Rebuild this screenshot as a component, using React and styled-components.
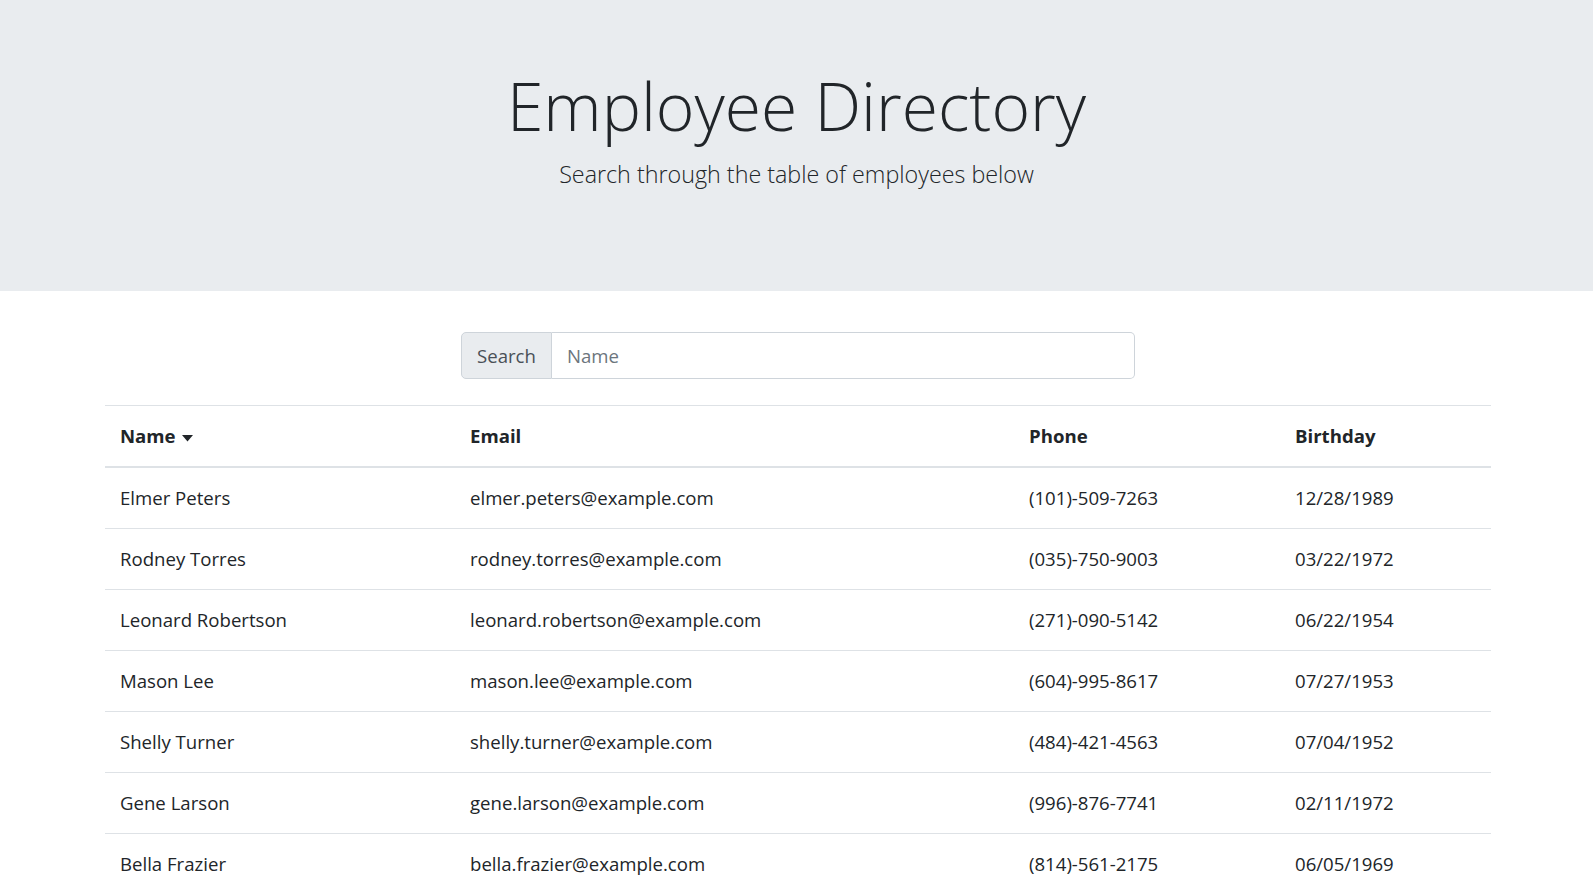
import styled, { createGlobalStyle } from "styled-components";

const GlobalStyle = createGlobalStyle`
    body {
        margin: 0;
        font-family: "Open Sans", "Noto Sans", sans-serif;
        font-size: 18.6px;
        line-height: 30px;
        color: #212529;
        background: #fff;
    }
`;

const Jumbotron = styled.header`
    box-sizing: border-box;
    height: 291px;
    padding-top: 63px;
    background-color: #e9ecef;
    text-align: center;
`;
const Title = styled.h1`
    margin: 0 0 9px;
    font-size: 66px;
    font-weight: 300;
    line-height: 84px;
`;
const Lead = styled.p`
    margin: 0;
    font-size: 23.3px;
    font-weight: 300;
    line-height: 37px;
`;

const Container = styled.main`
    max-width: 1386px;
    margin: 0 auto;
    padding-left: 3px;
`;

const SearchGroup = styled.div`
    display: flex;
    width: 674px;
    height: 47px;
    margin: 41px auto 26px;
`;
const SearchLabel = styled.span`
    display: flex;
    align-items: center;
    padding: 0 15px;
    background-color: #e9ecef;
    border: 1px solid #ced4da;
    border-radius: 5px 0 0 5px;
    color: #495057;
`;
const SearchInput = styled.input`
    flex: 1;
    min-width: 0;
    padding: 0 15px;
    border: 1px solid #ced4da;
    border-left: none;
    border-radius: 0 5px 5px 0;
    font: inherit;
    color: #495057;
    outline: none;
    &::placeholder {
        color: #6c757d;
    }
`;

const Table = styled.table`
    width: 100%;
    table-layout: fixed;
    border-collapse: collapse;
`;
const Th = styled.th`
    box-sizing: border-box;
    width: ${props => props.width || "auto"};
    padding: 15px;
    text-align: left;
    font-weight: 700;
    border-top: 1px solid #dee2e6;
    border-bottom: 2px solid #dee2e6;
`;
const Td = styled.td`
    padding: 15px;
    border-bottom: 1px solid #dee2e6;
    white-space: nowrap;
`;
const Caret = styled.svg`
    margin-left: 6px;
    vertical-align: middle;
`;

const employees = [
    ["Elmer Peters", "elmer.peters@example.com", "(101)-509-7263", "12/28/1989"],
    ["Rodney Torres", "rodney.torres@example.com", "(035)-750-9003", "03/22/1972"],
    ["Leonard Robertson", "leonard.robertson@example.com", "(271)-090-5142", "06/22/1954"],
    ["Mason Lee", "mason.lee@example.com", "(604)-995-8617", "07/27/1953"],
    ["Shelly Turner", "shelly.turner@example.com", "(484)-421-4563", "07/04/1952"],
    ["Gene Larson", "gene.larson@example.com", "(996)-876-7741", "02/11/1972"],
    ["Bella Frazier", "bella.frazier@example.com", "(814)-561-2175", "06/05/1969"],
    ["Ivan Ford", "ivan.ford@example.com", "(306)-512-4411", "09/14/1984"],
    ["Joan Hanson", "joan.hanson@example.com", "(745)-218-3370", "01/30/1961"],
];

const App = () => {
    return (
        <>
            <GlobalStyle />
            <Jumbotron>
                <Title>Employee Directory</Title>
                <Lead>Search through the table of employees below</Lead>
            </Jumbotron>
            <Container>
                <SearchGroup>
                    <SearchLabel>Search</SearchLabel>
                    <SearchInput type="text" placeholder="Name" />
                </SearchGroup>
                <Table>
                    <thead>
                        <tr>
                            <Th width="350px">
                                Name
                                <Caret width="11" height="7" viewBox="0 0 11 7">
                                    <path d="M0 0h11L5.5 6.5z" fill="#212529" />
                                </Caret>
                            </Th>
                            <Th width="559px">Email</Th>
                            <Th width="266px">Phone</Th>
                            <Th>Birthday</Th>
                        </tr>
                    </thead>
                    <tbody>
                        {employees.map(([name, email, phone, dob]) => (
                            <tr key={email}>
                                <Td>{name}</Td>
                                <Td>{email}</Td>
                                <Td>{phone}</Td>
                                <Td>{dob}</Td>
                            </tr>
                        ))}
                    </tbody>
                </Table>
            </Container>
        </>
    )
}

export default App
